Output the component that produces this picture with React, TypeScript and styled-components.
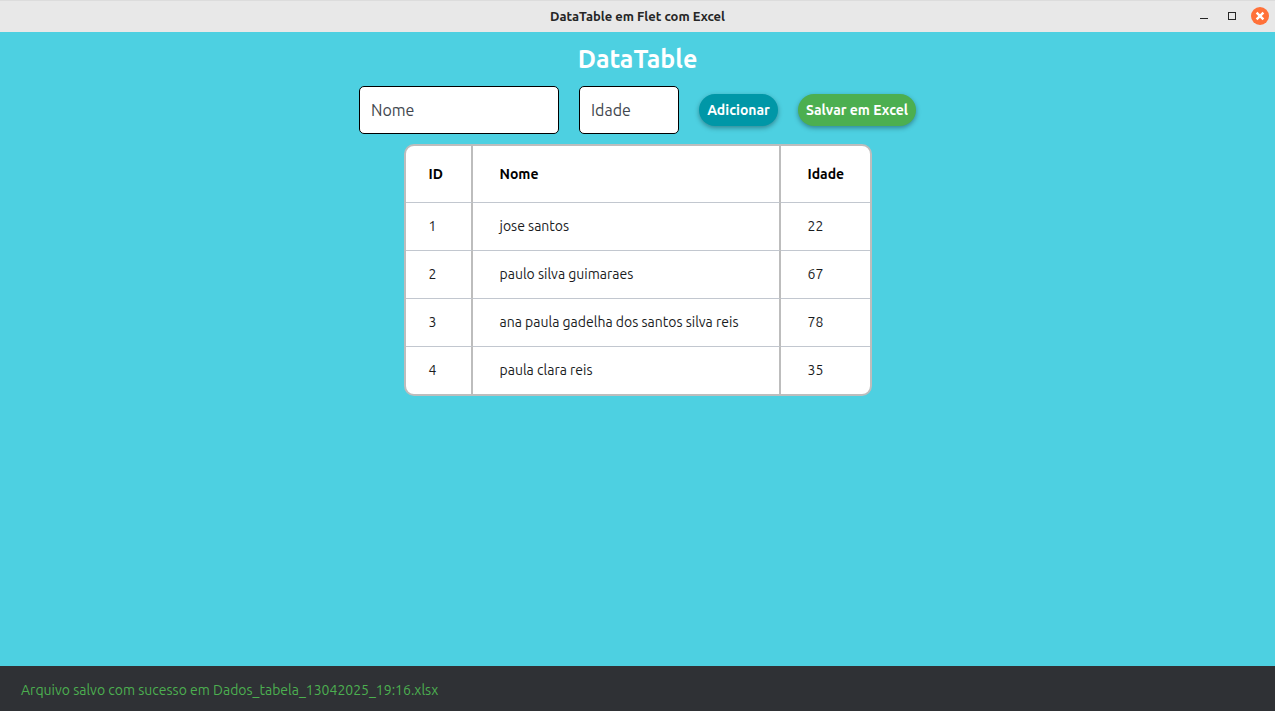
import React, { useState } from "react";
import styled, { createGlobalStyle } from "styled-components";

const GlobalStyle = createGlobalStyle`
  *, *::before, *::after { box-sizing: border-box; }
  body {
    margin: 0;
    background: #4dd0e1;
    font-family: Ubuntu, "Noto Sans", "Open Sans", sans-serif;
  }
`;

const Window = styled.div`
  display: flex;
  flex-direction: column;
  min-height: 100vh;
  background: #4dd0e1;
`;

const TitleBar = styled.header`
  display: grid;
  grid-template-columns: 1fr auto 1fr;
  align-items: center;
  height: 32px;
  padding: 0 6px;
  background: #e8e8e8;
  box-shadow: inset 0 1px #dcdcdc;
`;

const WindowTitle = styled.span`
  grid-column: 2;
  font-size: 13px;
  font-weight: 700;
  line-height: 16px;
  color: #262626;
`;

const WindowControls = styled.div`
  display: flex;
  justify-content: flex-end;
  gap: 10px;
`;

const ControlButton = styled.button`
  display: flex;
  width: 18px;
  height: 18px;
  padding: 0;
  border: 0;
  background: none;
`;

const Page = styled.main`
  flex: 1;
  display: flex;
  flex-direction: column;
  align-items: center;
  gap: 10px;
  padding: 10px;
`;

const Heading = styled.h1`
  margin: 0;
  font-size: 25px;
  font-weight: 700;
  line-height: 34px;
  color: #fff;
`;

const Form = styled.form`
  display: flex;
  align-items: center;
  gap: 20px;
`;

const Field = styled.input<{ $width: number }>`
  width: ${(p) => p.$width}px;
  height: 48px;
  padding: 0 11px;
  border: 1px solid #000;
  border-radius: 5px;
  outline: none;
  background: #fff;
  color: #1a1c1e;
  font-family: inherit;
  font-size: 16px;
  &::placeholder {
    color: #42474e;
    opacity: 1;
  }
`;

const PillButton = styled.button<{ $color: string; $width: number }>`
  min-width: ${(p) => p.$width}px;
  height: 32px;
  padding: 0 7px;
  border: 0;
  border-radius: 16px;
  background: ${(p) => p.$color};
  box-shadow: 0 2px 5px rgba(0, 0, 0, 0.35);
  color: #fff;
  font-family: inherit;
  font-size: 14px;
  font-weight: 700;
  line-height: 20px;
  white-space: nowrap;
`;

const TableFrame = styled.div`
  overflow: hidden;
  border: 2px solid #bdbdbd;
  border-radius: 10px;
  background: #fff;
`;

const Table = styled.table`
  width: 464px;
  table-layout: fixed;
  border-collapse: separate;
  border-spacing: 0;
  color: #1a1c1e;
  font-size: 14px;
  line-height: 20px;
  text-align: left;
`;

const Column = styled.col<{ $width: number }>`
  width: ${(p) => p.$width}px;
`;

const Row = styled.tr`
  height: 48px;
  th, td {
    padding: 0 0 2px 27px;
    border-top: 1px solid #c2c7cf;
    white-space: nowrap;
  }
  th {
    padding-bottom: 0;
    border-top: 0;
    color: #000;
    font-weight: 700;
  }
  th:first-child, td:first-child { padding-left: 23px; }
  th:not(:last-child), td:not(:last-child) { border-right: 2px solid #bdbdbd; }
`;

const HeaderRow = styled(Row)`
  height: 56px;
`;

const SnackBar = styled.footer`
  padding: 14px 21px 11px;
  background: #2f3135;
  color: #4caf50;
  font-size: 14px;
  line-height: 20px;
`;

const people = [
  { id: 1, name: "jose santos", age: 22 },
  { id: 2, name: "paulo silva guimaraes", age: 67 },
  { id: 3, name: "ana paula gadelha dos santos silva reis", age: 78 },
  { id: 4, name: "paula clara reis", age: 35 },
];

export default function App() {
  const [rows, setRows] = useState(people);
  const [name, setName] = useState("");
  const [age, setAge] = useState("");

  const addPerson = (event: React.FormEvent) => {
    event.preventDefault();
    if (!name || !age) return;
    setRows([...rows, { id: rows.length + 1, name, age: Number(age) }]);
    setName("");
    setAge("");
  };

  return (
    <Window>
      <GlobalStyle />
      <TitleBar>
        <WindowTitle>DataTable em Flet com Excel</WindowTitle>
        <WindowControls>
          <ControlButton type="button" aria-label="Minimizar">
            <svg width="18" height="18" viewBox="0 0 18 18" shapeRendering="crispEdges">
              <rect x="5" y="11" width="8" height="1" fill="#262626" />
            </svg>
          </ControlButton>
          <ControlButton type="button" aria-label="Maximizar">
            <svg width="18" height="18" viewBox="0 0 18 18">
              <rect x="5.5" y="5.5" width="7" height="7" fill="none" stroke="#262626" />
            </svg>
          </ControlButton>
          <ControlButton type="button" aria-label="Fechar">
            <svg width="18" height="18" viewBox="0 0 18 18">
              <circle cx="9" cy="9" r="9" fill="#ff7139" />
              <path d="M5.6 5.6l6.8 6.8M12.4 5.6l-6.8 6.8" stroke="#fff" strokeWidth="2.4" />
            </svg>
          </ControlButton>
        </WindowControls>
      </TitleBar>

      <Page>
        <Heading>DataTable</Heading>
        <Form onSubmit={addPerson}>
          <Field
            $width={200}
            aria-label="Nome"
            placeholder="Nome"
            value={name}
            onChange={(e) => setName(e.target.value)}
          />
          <Field
            $width={100}
            aria-label="Idade"
            placeholder="Idade"
            inputMode="numeric"
            value={age}
            onChange={(e) => setAge(e.target.value)}
          />
          <PillButton type="submit" $color="#0097a7" $width={79}>Adicionar</PillButton>
          <PillButton type="button" $color="#4caf50" $width={118}>Salvar em Excel</PillButton>
        </Form>
        <TableFrame>
          <Table>
            <colgroup>
              <Column $width={67} />
              <Column $width={308} />
              <Column $width={89} />
            </colgroup>
            <thead>
              <HeaderRow>
                <th scope="col">ID</th>
                <th scope="col">Nome</th>
                <th scope="col">Idade</th>
              </HeaderRow>
            </thead>
            <tbody>
              {rows.map((person) => (
                <Row key={person.id}>
                  <td>{person.id}</td>
                  <td>{person.name}</td>
                  <td>{person.age}</td>
                </Row>
              ))}
            </tbody>
          </Table>
        </TableFrame>
      </Page>

      <SnackBar role="status">Arquivo salvo com sucesso em Dados_tabela_13042025_19:16.xlsx</SnackBar>
    </Window>
  );
}
